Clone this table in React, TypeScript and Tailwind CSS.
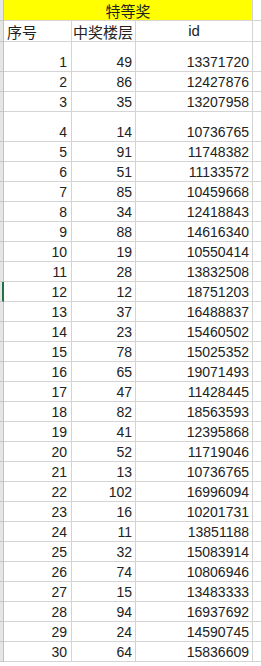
const rows: [number, number, number, string][] = [
  [1, 49, 13371720, "h-[30px]"],
  [2, 86, 12427876, "h-[20px]"],
  [3, 35, 13207958, "h-[20px]"],
  [4, 14, 10736765, "h-[30px]"],
  [5, 91, 11748382, "h-[20px]"],
  [6, 51, 11133572, "h-[20px]"],
  [7, 85, 10459668, "h-[20px]"],
  [8, 34, 12418843, "h-[20px]"],
  [9, 88, 14616340, "h-[20px]"],
  [10, 19, 10550414, "h-[20px]"],
  [11, 28, 13832508, "h-[20px]"],
  [12, 12, 18751203, "h-[20px]"],
  [13, 37, 16488837, "h-[20px]"],
  [14, 23, 15460502, "h-[20px]"],
  [15, 78, 15025352, "h-[20px]"],
  [16, 65, 19071493, "h-[20px]"],
  [17, 47, 11428445, "h-[20px]"],
  [18, 82, 18563593, "h-[20px]"],
  [19, 41, 12395868, "h-[20px]"],
  [20, 52, 11719046, "h-[20px]"],
  [21, 13, 10736765, "h-[20px]"],
  [22, 102, 16996094, "h-[20px]"],
  [23, 16, 10201731, "h-[20px]"],
  [24, 11, 13851188, "h-[20px]"],
  [25, 32, 15083914, "h-[20px]"],
  [26, 74, 10806946, "h-[20px]"],
  [27, 15, 13483333, "h-[20px]"],
  [28, 94, 16937692, "h-[20px]"],
  [29, 24, 14590745, "h-[20px]"],
  [30, 64, 15836609, "h-[20px]"],
]

const num = "font-['Liberation_Sans',sans-serif] text-[14px] leading-[16px] text-[#222]"
const cjk = "font-['Noto_Sans_CJK_SC',sans-serif] text-[15px] leading-[18px] text-[#222]"

const Strip = ({ selected }: { selected?: boolean }) => (
  <div
    className={
      "w-[4px] shrink-0 bg-[#e6e6e6] border-b border-[#c6c6c6] " +
      (selected ? "border-r-2 border-r-[#217346]" : "border-r border-r-[#c0c0c0]")
    }
  />
)

export default function App() {
  return (
    <div className="w-[261px] h-[666px] overflow-hidden bg-white">
      {/* title row */}
      <div className="flex h-[21px]">
        <Strip />
        <div className={"w-[249px] shrink-0 bg-[#ffff00] border-r border-b border-[#d4d4d4] flex items-end justify-center " + cjk}>
          特等奖
        </div>
        <div className="flex-1 border-b border-[#d4d4d4]" />
      </div>

      {/* header row */}
      <div className="flex h-[21px]">
        <Strip />
        <div className={"w-[68px] shrink-0 border-r border-b border-[#d4d4d4] flex items-end pl-[3px] " + cjk}>序号</div>
        <div className={"w-[64px] shrink-0 border-r border-b border-[#d4d4d4] flex items-end pl-[1px] " + cjk}>中奖楼层</div>
        <div className="w-[117px] shrink-0 border-r border-b border-[#d4d4d4] flex items-end justify-center pb-[1px] font-['Liberation_Sans',sans-serif] text-[15px] leading-[18px] text-[#222]">
          id
        </div>
        <div className="flex-1 border-b border-[#d4d4d4]" />
      </div>

      {rows.map(([n, floor, id, h]) => (
        <div key={n} className={"flex " + h}>
          <Strip selected={n === 12} />
          <div className={"w-[68px] shrink-0 border-r border-b border-[#d4d4d4] flex items-end justify-end pr-[4px] pb-[1px] " + num}>{n}</div>
          <div className={"w-[64px] shrink-0 border-r border-b border-[#d4d4d4] flex items-end justify-end pr-[3px] pb-[1px] " + num}>{floor}</div>
          <div className={"w-[117px] shrink-0 border-r border-b border-[#d4d4d4] flex items-end justify-end pr-[3px] pb-[1px] " + num}>{id}</div>
          <div className="flex-1 border-b border-[#d4d4d4]" />
        </div>
      ))}
    </div>
  )
}
